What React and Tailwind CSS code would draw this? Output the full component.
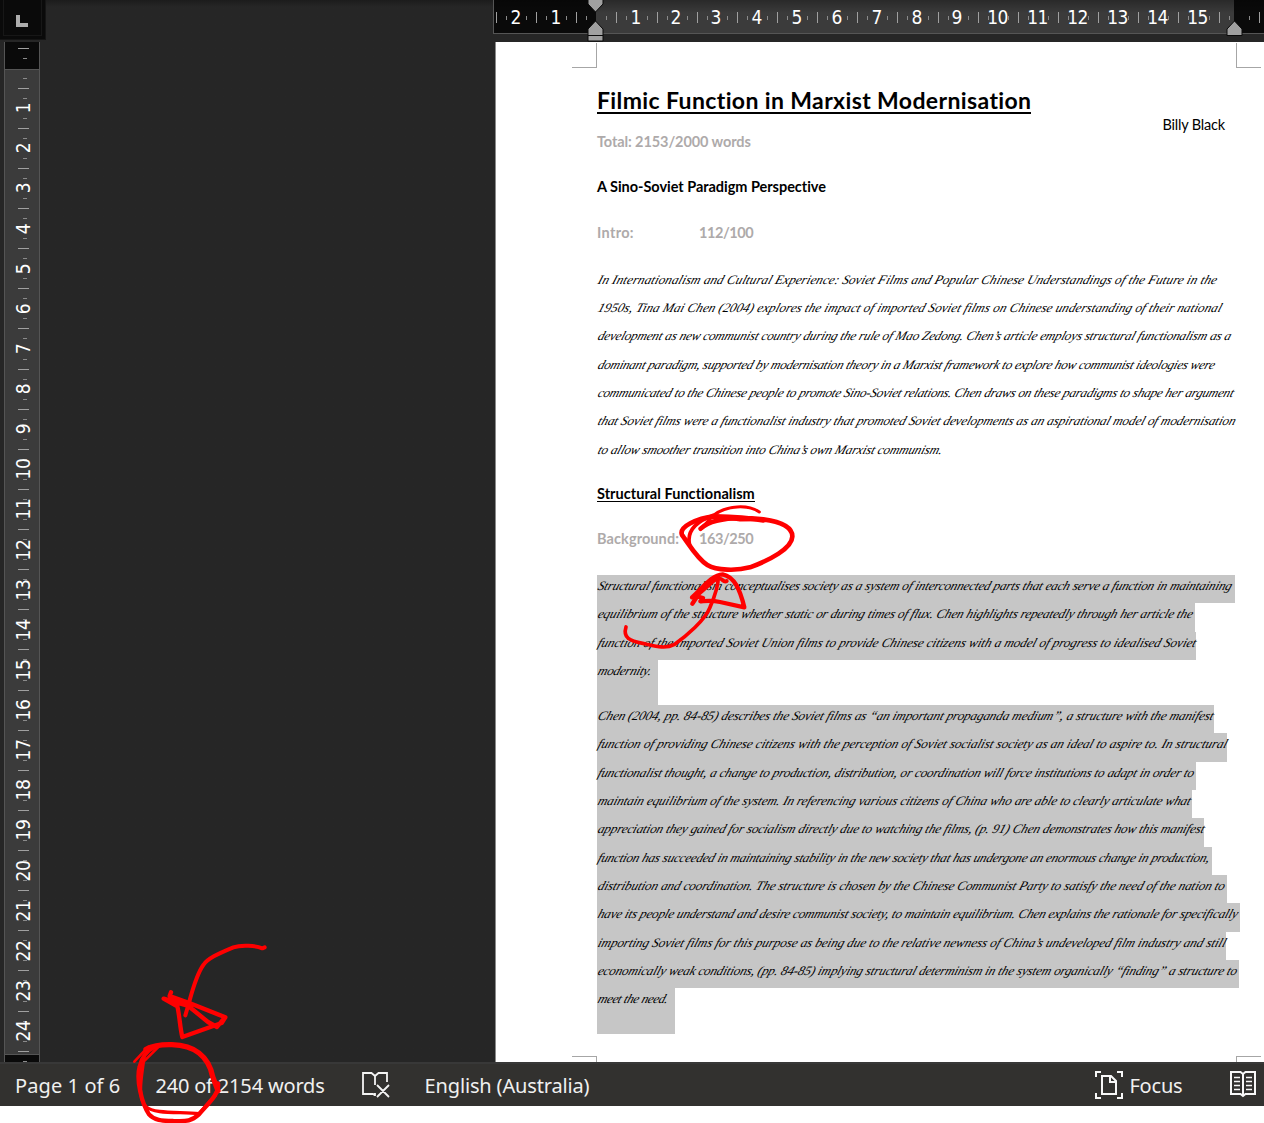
import { useLayoutEffect, useRef } from "react";

// Single line of text whose tracking is adjusted so that it spans `width` pixels.
function Fit({ width, className = "", children }) {
  const ref = useRef(null);
  useLayoutEffect(() => {
    const el = ref.current;
    el.style.letterSpacing = "0px";
    const natural = el.offsetWidth;
    el.style.letterSpacing = `${(width - natural) / children.length}px`;
  }, [width, children]);
  return (
    <span ref={ref} className={`inline-block whitespace-pre ${className}`}>
      {children}
    </span>
  );
}

const intro = [
  ["In Internationalism and Cultural Experience: Soviet Films and Popular Chinese Understandings of the Future in the", 619],
  ["1950s, Tina Mai Chen (2004) explores the impact of imported Soviet films on Chinese understanding of their national", 624],
  ["development as new communist country during the rule of Mao Zedong. Chen’s article employs structural functionalism as a", 633],
  ["dominant paradigm, supported by modernisation theory in a Marxist framework to explore how communist ideologies were", 616],
  ["communicated to the Chinese people to promote Sino-Soviet relations. Chen draws on these paradigms to shape her argument", 635],
  ["that Soviet films were a functionalist industry that promoted Soviet developments as an aspirational model of modernisation", 637],
  ["to allow smoother transition into China’s own Marxist communism.", 344],
];

// text, text width, selection width, row height
const background = [
  ["Structural functionalism conceptualises society as a system of interconnected parts that each serve a function in maintaining", 634, 638, 28],
  ["equilibrium of the structure whether static or during times of flux. Chen highlights repeatedly through her article the", 595, 598, 29],
  ["function of the imported Soviet Union films to provide Chinese citizens with a model of progress to idealised Soviet", 598, 599, 28],
  ["modernity.", 53, 61, 45],
  ["Chen (2004, pp. 84-85) describes the Soviet films as “an important propaganda medium”, a structure with the manifest", 615, 617, 28],
  ["function of providing Chinese citizens with the perception of Soviet socialist society as an ideal to aspire to. In structural", 629, 630, 29],
  ["functionalist thought, a change to production, distribution, or coordination will force institutions to adapt in order to", 596, 599, 28],
  ["maintain equilibrium of the system. In referencing various citizens of China who are able to clearly articulate what", 593, 595, 28],
  ["appreciation they gained for socialism directly due to watching the films, (p. 91) Chen demonstrates how this manifest", 606, 607, 29],
  ["function has succeeded in maintaining stability in the new society that has undergone an enormous change in production,", 611, 615, 28],
  ["distribution and coordination. The structure is chosen by the Chinese Communist Party to satisfy the need of the nation to", 627, 630, 28],
  ["have its people understand and desire communist society, to maintain equilibrium. Chen explains the rationale for specifically", 640, 643, 29],
  ["importing Soviet films for this purpose as being due to the relative newness of China’s undeveloped film industry and still", 628, 629, 28],
  ["economically weak conditions, (pp. 84-85) implying structural determinism in the system organically “finding” a structure to", 639, 642, 28],
  ["meet the need.", 70, 78, 46],
];

const script =
  "-ml-[2px] origin-bottom-left -skew-x-[18deg] font-['Liberation_Serif',serif] text-[13px] italic leading-[21px] text-black";
const bold = "font-['Lato',sans-serif] text-[14.5px] font-bold leading-5";
const status = "font-['Noto_Sans',sans-serif] text-[20px] leading-[28px] text-[#f0f0f0] pt-px";

const hLabels = ["2", "1", "", ...Array.from({ length: 15 }, (_, i) => String(i + 1)), "", ""];
const vLabels = ["", ...Array.from({ length: 24 }, (_, i) => String(i + 1)), ""];

function HorizontalRuler() {
  return (
    <div className="relative h-[34px] w-[771px] border-b border-l border-[#555555] bg-[linear-gradient(to_right,#0a0a0a_102px,#3b3b3b_102px,#3b3b3b_740px,#0a0a0a_740px)]">
      <div className="flex h-full overflow-hidden bg-linear-to-b from-black/30 to-transparent to-40% pl-[2px]">
        {hLabels.map((label, i) => (
          <div key={i} className="flex w-[40.15px] shrink-0 items-center pt-[2px]">
            <i className="h-[11px] w-px shrink-0 bg-[#a0a0a0]" />
            <i className="ml-[9px] h-1 w-px shrink-0 bg-[#8a8a8a]" />
            <span className="-ml-[2px] -mt-[2px] flex min-w-0 flex-1 justify-center">
              <b className="shrink-0 scale-x-[.9] font-['DejaVu_Sans',sans-serif] text-[19px] font-normal leading-6 tracking-[-0.5px] text-white">
                {label}
              </b>
            </span>
            <i className="mr-[9px] h-1 w-px shrink-0 bg-[#8a8a8a]" />
          </div>
        ))}
      </div>
      <svg className="absolute left-[93px] top-0" width="18" height="42" viewBox="0 0 18 42">
        <path d="M1 -1V4L8.5 12L16 4V-1Z" fill="#a0a0a0" stroke="#0a0a0a" />
        <path d="M8.500 21L16 29V35.500H1V29Z" fill="#a0a0a0" stroke="#0a0a0a" />
        <path d="M1 35.500H16V41H1Z" fill="#a0a0a0" stroke="#0a0a0a" />
      </svg>
      <svg className="absolute left-[732px] top-0" width="18" height="42" viewBox="0 0 18 42">
        <path d="M8.500 21L16 29V35.500H1V29Z" fill="#a0a0a0" stroke="#0a0a0a" />
      </svg>
    </div>
  );
}

function VerticalRuler() {
  return (
    <div className="ml-1 h-[1020px] w-9 overflow-hidden border-x border-[#555555] bg-[linear-gradient(to_bottom,#0a0a0a_27px,#555_27px,#555_28px,#3b3b3b_28px,#3b3b3b_1012px,#555_1012px,#555_1013px,#0a0a0a_1013px)] pl-[2px] pt-[5.5px]">
      {vLabels.map((label, i) => (
        <div key={i} className="flex h-[40.13px] flex-col items-center">
          <i className="h-px w-[11px] shrink-0 bg-[#a0a0a0]" />
          <i className="ml-[3px] mt-[9px] h-px w-1 shrink-0 bg-[#8a8a8a]" />
          <span className="flex min-h-0 flex-1 items-center">
            <b className="shrink-0 -rotate-90 scale-x-[.9] font-['DejaVu_Sans',sans-serif] text-[19px] font-normal leading-5 tracking-[-0.5px] text-white">
              {label}
            </b>
          </span>
          <i className="mb-[9px] ml-[3px] h-px w-1 shrink-0 bg-[#8a8a8a]" />
        </div>
      ))}
    </div>
  );
}

function Document() {
  return (
    <main className="relative h-[1020px] w-[769px] border-l border-[#8a8a8a] bg-white pl-[101px]">
      <i className="absolute left-[76px] top-px h-[25px] w-[25px] border-b border-r border-[#a6a6a6]" />
      <i className="absolute left-[740px] top-px h-[25px] w-[25px] border-b border-l border-[#a6a6a6]" />
      <i className="absolute left-[76px] top-[1014px] h-[6px] w-[25px] border-r border-t border-[#a6a6a6]" />
      <i className="absolute left-[740px] top-[1014px] h-[6px] w-[25px] border-l border-t border-[#a6a6a6]" />
      <header className="flex w-[628px] justify-between">
        <div className="flex flex-col items-start pt-[44px]">
          <h1 className="flex h-[28px] border-b-2 border-black text-black">
            <Fit width={435} className="font-['Lato',sans-serif] text-[23px] font-bold leading-[29px]">
              Filmic Function in Marxist Modernisation
            </Fit>
          </h1>
          <Fit width={154} className={`${bold} mt-[18px] text-[#aeaaaa]`}>Total: 2153/2000 words</Fit>
        </div>
        <Fit width={63} className="mt-[73px] h-5 font-['Lato',sans-serif] text-[14.5px] leading-5 text-black">Billy Black</Fit>
      </header>
      <h2 className="mt-[25px] flex h-5 text-black">
        <Fit width={229} className={bold}>A Sino-Soviet Paradigm Perspective</Fit>
      </h2>
      <div className="mt-[26px] flex h-5 text-[#aeaaaa]">
        <div className="flex w-[102px]"><Fit width={37} className={bold}>Intro:</Fit></div>
        <Fit width={54} className={bold}>112/100</Fit>
      </div>
      <div className="mt-[25.5px]">
        {intro.map(([text, width]) => (
          <p key={text} className="flex h-[28.4px] items-start">
            <Fit width={width} className={script}>{text}</Fit>
          </p>
        ))}
      </div>
      <h2 className="mt-[17px] flex h-5 text-black">
        <span className="flex h-[18px] border-b border-black">
          <Fit width={158} className={bold}>Structural Functionalism</Fit>
        </span>
      </h2>
      <div className="mt-[25px] flex h-5 text-[#aeaaaa]">
        <div className="flex w-[102px]"><Fit width={82} className={bold}>Background:</Fit></div>
        <Fit width={54} className={bold}>163/250</Fit>
      </div>
      <div className="mt-[25.700px]">
        {background.map(([text, width, selected, height]) => (
          <p key={text} className="flex items-start bg-[#c6c6c6]" style={{ width: selected, height }}>
            <Fit width={width} className={script}>{text}</Fit>
          </p>
        ))}
      </div>
    </main>
  );
}

function StatusBar() {
  return (
    <footer className="flex h-11 items-center border-t-2 border-[#383838] bg-[#32312f] pl-[15px]">
      <Fit width={105} className={status}>Page 1 of 6</Fit>
      <Fit width={169} className={`${status} ml-[35px]`}>240 of 2154 words</Fit>
      <svg className="ml-[36px]" width="30" height="28" viewBox="0 0 30 28" fill="none" stroke="#f4f4f4" strokeWidth="1.800">
        <path d="M13.500 24L12 23H2V2H10.500L14 5L17.500 2H26V11M14 5V14M14 22V25M16 14L28 26M28 14L16 26" />
      </svg>
      <Fit width={165} className={`${status} ml-[34px]`}>English (Australia)</Fit>
      <svg className="ml-[506px]" width="28" height="28" viewBox="0 0 28 28" fill="none" stroke="#f8f8f8" strokeWidth="2">
        <path d="M1 6V1H6M22 1H27V6M27 22V27H22M6 27H1V22" />
        <path d="M7 5H16L21 10V23H7ZM15 5V11H21" />
      </svg>
      <Fit width={53} className={`${status} ml-[6px]`}>Focus</Fit>
      <svg className="-mt-[3px] ml-[47px] shrink-0" width="28" height="28" viewBox="0 0 28 28" fill="none" stroke="#f8f8f8" strokeWidth="2">
        <path d="M14 4L11.500 2H2V24H11.500L14 26L16.500 24H26V2H16.500ZM14 4V26" />
        <path d="M5 7.500H11M5 11.500H11M5 15.500H11M5 19.500H11M17 7.500H23M17 11.500H23M17 15.500H23M17 19.500H23" strokeWidth="1.600" />
      </svg>
    </footer>
  );
}

// Red freehand circles and arrows drawn over the window.
function Ink() {
  return (
    <svg
      className="pointer-events-none absolute left-0 top-0"
      width="1264"
      height="1123"
      viewBox="0 0 1264 1123"
      fill="none"
      stroke="#ff0000"
      strokeLinecap="round"
      strokeLinejoin="round"
    >
      <g transform="translate(590 480) scale(.33333)">
        <path strokeWidth="9" d="M508 96C475 73 410 75 370 106L332 148" />
        <path strokeWidth="14" d="M332 146C365 115 440 110 520 118C570 125 608 140 607 170C606 205 540 240 480 262C440 273 380 272 352 255C320 235 292 185 276 165C266 140 320 115 374 109C420 110 480 114 520 121" />
        <path strokeWidth="11" d="M370 106C310 128 290 158 299 195M375 108L450 119L520 118" />
        <path strokeWidth="11" d="M108 441C98 474 120 483 158 490C195 498 225 508 252 494C290 468 345 420 360 382C377 342 385 318 385 290" />
        <path strokeWidth="13" d="M307 371L326 343L306 352C340 322 365 285 398 283C434 290 450 330 463 382L390 366C360 359 340 364 331 364L339 354L318 348L375 298" />
        <path strokeWidth="12" d="M378 299C398 287 398 311 410 303" />
      </g>
      <g transform="translate(0 930) scale(.33333)">
        <path strokeWidth="12" d="M794 52L787 55C767 46 722 44 700 52C652 72 622 86 610 105C588 135 575 190 565 225L556 256" />
        <path strokeWidth="13" d="M513 187L509 198L570 220L676 262L665 279L547 321C540 294 539 258 532 229L491 206L565 228L624 276L651 291L672 265" />
        <path strokeWidth="8" d="M403 395L445 350M434 392L478 348" />
        <path strokeWidth="16" d="M438 358C475 339 555 336 597 369C620 387 632 408 638 440L654 482" />
        <path strokeWidth="13" d="M654 460C660 490 625 520 597 553C570 577 555 573 520 573C484 572 463 571 447 553C425 520 408 450 419 410C426 378 444 360 465 350" />
        <path strokeWidth="10" d="M432 382C425 440 410 500 438 530C462 553 540 545 597 551L646 496" />
      </g>
    </svg>
  );
}

export default function App() {
  return (
    <div className="relative h-[1123px] w-[1264px] overflow-hidden bg-white">
      <div className="h-[1062px] bg-[#262626] bg-linear-to-b from-[#1c1c1c] to-[#262626] to-[7px]">
        <div className="flex h-[42px] justify-between">
          <div className="h-10 w-[46px] border-b border-r border-[#151515] bg-[#0a0a0a] pl-[3px]">
            <div className="h-9 w-[39px] border-x border-b border-[#171717] pl-3 pt-[15px]">
              <div className="h-3 w-3 border-b-4 border-l-4 border-[#adadad]" />
            </div>
          </div>
          <HorizontalRuler />
        </div>
        <div className="flex justify-between">
          <VerticalRuler />
          <Document />
        </div>
      </div>
      <StatusBar />
      <Ink />
    </div>
  );
}
